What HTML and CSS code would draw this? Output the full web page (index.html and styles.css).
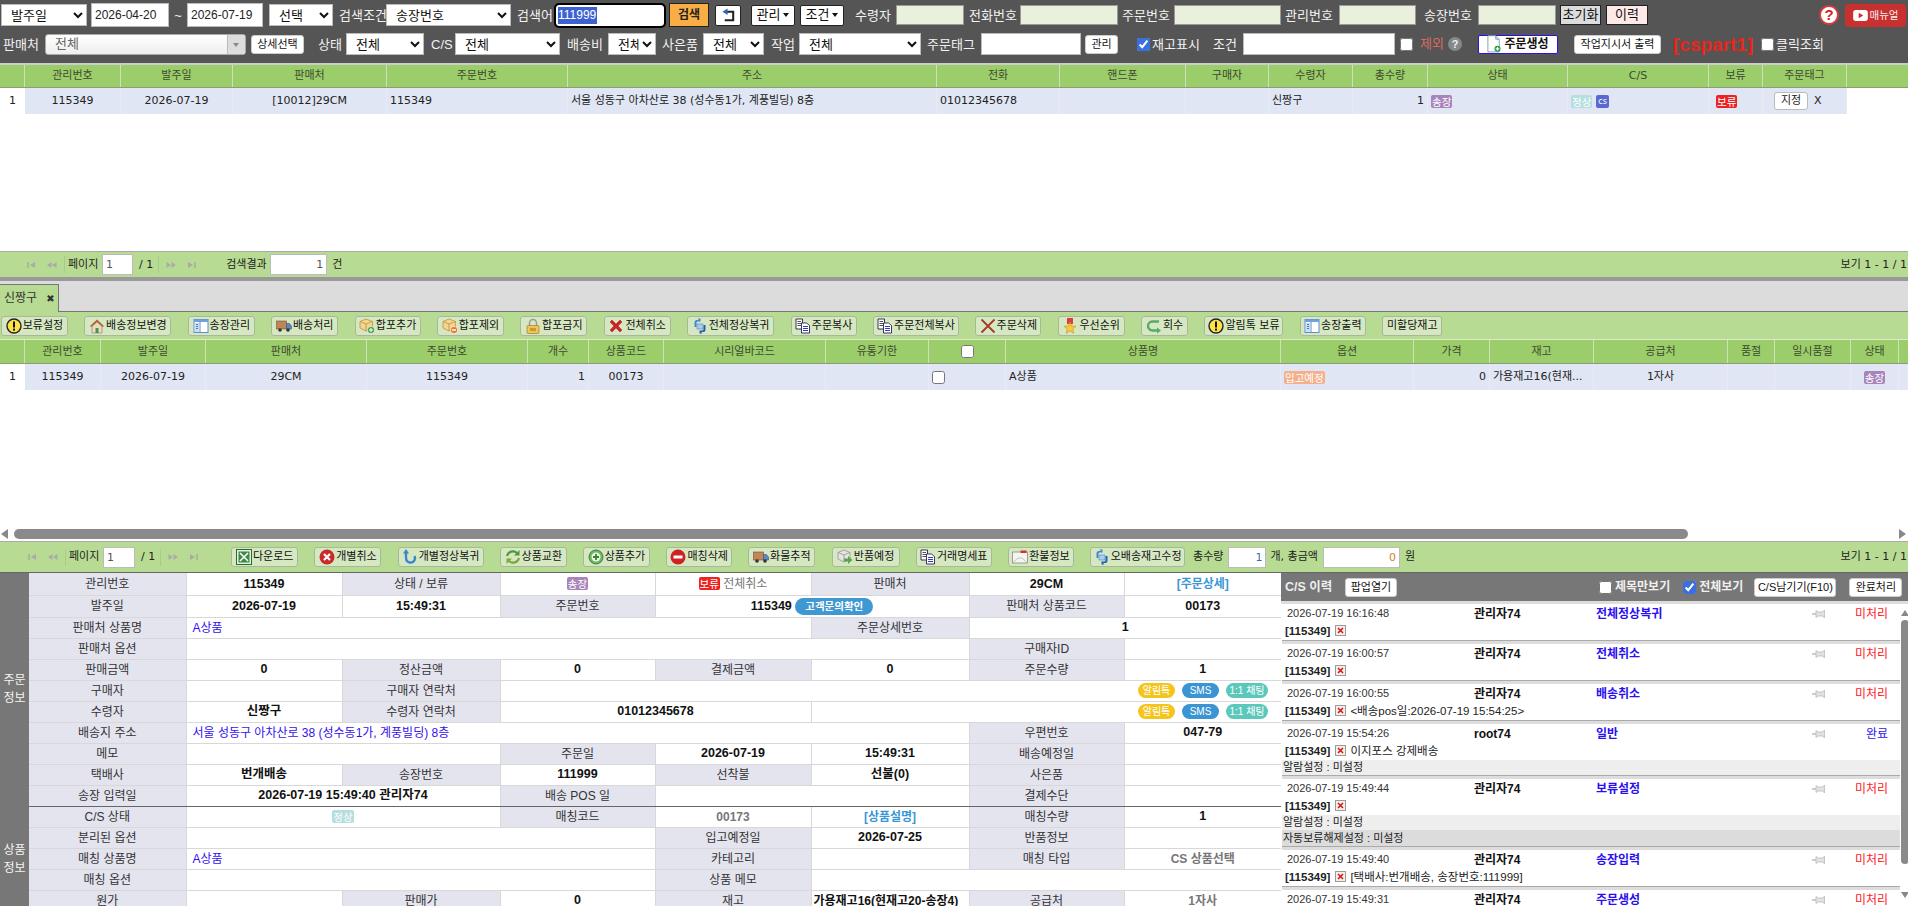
FILE: index.html
```html
<!DOCTYPE html>
<html lang="ko">
<head>
<meta charset="utf-8">
<title>주문 관리</title>
<link rel="stylesheet" href="styles.css">
</head>
<body>
<svg class="defs" width="0" height="0">
  <symbol id="i-warn" viewBox="0 0 16 16"><circle cx="8" cy="8" r="7" fill="#ffe24a" stroke="#222" stroke-width="1.4"/><rect x="7" y="3.500" width="2" height="6" fill="#111"/><rect x="7" y="10.600" width="2" height="2" fill="#111"/></symbol>
  <symbol id="i-house" viewBox="0 0 16 16"><path d="M1 8 8 1.500 15 8l-1.200 1L8 4 2.200 9z" fill="#b5603a"/><path d="M3 8.500 8 4.200l5 4.300V15H3z" fill="#eadcb8" stroke="#8a7a58" stroke-width=".6"/><rect x="6.500" y="10" width="3" height="5" fill="#4f8f55"/></symbol>
  <symbol id="i-win" viewBox="0 0 16 16"><rect x="1" y="1.500" width="14" height="13" fill="#fff" stroke="#5b8fd0"/><rect x="1" y="1.500" width="14" height="2.500" fill="#6ea3e0"/><rect x="2" y="5" width="4" height="9" fill="#cfe0f5"/><path d="M3 6.500h2M3 8.500h2M3 10.500h2" stroke="#4a78b5"/><path d="M7 4v10" stroke="#5b8fd0"/></symbol>
  <symbol id="i-truck" viewBox="0 0 16 16"><rect x=".5" y="3" width="10" height="8" fill="#c0855a" stroke="#7a4f30" stroke-width=".6"/><path d="M10.500 5.500h3l2 2.500v3h-5z" fill="#5f87c0" stroke="#37557f" stroke-width=".6"/><circle cx="4" cy="12" r="1.800" fill="#333"/><circle cx="12" cy="12" r="1.800" fill="#333"/></symbol>
  <symbol id="i-boxadd" viewBox="0 0 16 16"><path d="M7 1 13.500 3.500V10L7 13 1 10V3.500z" fill="#f5d58e" stroke="#b08a3a" stroke-width=".7"/><path d="M1 3.500 7 6l6.500-2.500M7 6v7" fill="none" stroke="#b08a3a" stroke-width=".7"/><circle cx="12" cy="12" r="3.600" fill="#4aa04a" stroke="#fff" stroke-width=".6"/><path d="M12 10v4M10 12h4" stroke="#fff" stroke-width="1.100"/></symbol>
  <symbol id="i-boxrem" viewBox="0 0 16 16"><path d="M7 1 13.500 3.500V10L7 13 1 10V3.500z" fill="#f5d58e" stroke="#b08a3a" stroke-width=".7"/><path d="M1 3.500 7 6l6.500-2.500M7 6v7" fill="none" stroke="#b08a3a" stroke-width=".7"/><circle cx="12" cy="12" r="3.600" fill="#e57a2a" stroke="#fff" stroke-width=".6"/><path d="M10 12h4" stroke="#fff" stroke-width="1.300"/></symbol>
  <symbol id="i-lock" viewBox="0 0 16 16"><path d="M4.500 8V5a3.500 3.500 0 0 1 7 0v3" fill="none" stroke="#999" stroke-width="1.500"/><rect x="2" y="7.500" width="12" height="8" rx="1" fill="#eec55a" stroke="#a47f25" stroke-width=".7"/><rect x="5" y="10" width="6" height="3" fill="#c89a30"/></symbol>
  <symbol id="i-xred" viewBox="0 0 16 16"><path d="M2 4 4 2l4 4 4-4 2 2-4 4 4 4-2 2-4-4-4 4-2-2 4-4z" fill="#d42020" stroke="#8a1010" stroke-width=".4"/></symbol>
  <symbol id="i-sync" viewBox="0 0 16 16"><path d="M2.500 9V4.500A2.500 2.500 0 0 1 5 2h2L5.500.5h3v3L7 3.500H5.500A1.300 1.300 0 0 0 4.500 5V9z" fill="#3d88d8"/><path d="M13.500 7v4.500A2.500 2.500 0 0 1 11 14H9l1.500 1.500h-3v-3L9 12.500h1.500a1.300 1.300 0 0 0 1-1.500V7z" fill="#2060b0"/><rect x="5" y="6" width="6" height="5" fill="#a8cdf0" stroke="#4077b8" stroke-width=".5"/></symbol>
  <symbol id="i-copy" viewBox="0 0 16 16"><path d="M1 1h6.500v10H1z" fill="#fff" stroke="#223" stroke-width=".9"/><path d="M2.500 3.500h3.500M2.500 5.500h3.500M2.500 7.500h3.500" stroke="#223" stroke-width=".8"/><path d="M6.500 5h5l3 2.500V15h-8z" fill="#fff" stroke="#225" stroke-width=".9"/><path d="M8 8.500h5M8 10.500h5M8 12.500h5" stroke="#22a" stroke-width=".9"/></symbol>
  <symbol id="i-xthin" viewBox="0 0 16 16"><path d="M1.500 1.500 14.500 14.500M14.500 1.500 1.500 14.500" stroke="#a53a2a" stroke-width="1.800"/></symbol>
  <symbol id="i-medal" viewBox="0 0 16 16"><path d="M5 0h6v6H5z" fill="#d8403a"/><path d="M8 4 9.700 8l4.300.3-3.300 2.700 1.100 4.300L8 13l-3.800 2.300 1.100-4.300L2 8.300 6.300 8z" fill="#f8c840" stroke="#c89220" stroke-width=".6"/></symbol>
  <symbol id="i-back" viewBox="0 0 16 16"><path d="M13 3.500H6.500a4.500 4.500 0 0 0 0 9H12" fill="none" stroke="#5aa86a" stroke-width="2.400"/><path d="M15 12.500 11 9.500v6z" fill="#5aa86a"/></symbol>
  <symbol id="i-excel" viewBox="0 0 16 16"><rect x=".5" y=".5" width="15" height="15" fill="#e2f0dc" stroke="#2a6b32"/><rect x="2.500" y="2.500" width="11" height="11" fill="#3a8a45"/><path d="M4 4 12 12M12 4 4 12" stroke="#fff" stroke-width="1.600"/></symbol>
  <symbol id="i-cancel" viewBox="0 0 16 16"><circle cx="8" cy="8" r="7.500" fill="#c92a2a"/><path d="M5 5 11 11M11 5 5 11" stroke="#fff" stroke-width="2.200"/></symbol>
  <symbol id="i-undo" viewBox="0 0 16 16"><path d="M4 3.500V9a4.500 4.500 0 1 0 8.500-2" fill="none" stroke="#3a85cf" stroke-width="2.400"/><path d="M4 0 7 4.500H1z" fill="#3a85cf"/></symbol>
  <symbol id="i-swap" viewBox="0 0 16 16"><path d="M2 7a6 6 0 0 1 10-3" fill="none" stroke="#4a9a40" stroke-width="2.200"/><path d="M14.500 1v5.500H9z" fill="#4a9a40"/><path d="M14 9a6 6 0 0 1-10 3" fill="none" stroke="#7aa83a" stroke-width="2.200"/><path d="M1.500 15V9.500H7z" fill="#7aa83a"/></symbol>
  <symbol id="i-plus" viewBox="0 0 16 16"><circle cx="8" cy="8" r="7" fill="#6eb765" stroke="#3e8038"/><circle cx="8" cy="8" r="4.500" fill="#eaf6e2"/><path d="M8 5v6M5 8h6" stroke="#3e8038" stroke-width="1.800"/></symbol>
  <symbol id="i-stop" viewBox="0 0 16 16"><circle cx="8" cy="8" r="7.500" fill="#cf2222"/><rect x="3.500" y="6.500" width="9" height="3" fill="#fff"/></symbol>
  <symbol id="i-ret" viewBox="0 0 16 16"><path d="M7 1 13 3.500V10L7 13 1 10V3.500z" fill="#e4e4e4" stroke="#8a8a8a" stroke-width=".7"/><path d="M1 3.500 7 6l6-2.500M7 6v7" fill="none" stroke="#8a8a8a" stroke-width=".7"/><path d="M7 9.500h4V7l4.500 4-4.500 4v-2.500H7z" fill="#5aa845"/></symbol>
  <symbol id="i-mail" viewBox="0 0 16 16"><rect x=".5" y="3" width="15" height="11" fill="#f4f4f0" stroke="#8a8a80" stroke-width=".8"/><path d="M.5 14 6 9h4l5.500 5" fill="none" stroke="#b0b0a8" stroke-width=".7"/><rect x="8.500" y="1.500" width="6" height="2.500" fill="#d83030"/></symbol>
  <symbol id="i-doc" viewBox="0 0 16 20"><path d="M1 .5h9l4 4V19H1z" fill="#fff" stroke="#7a97a8"/><path d="M10 .5v4h4" fill="#cfe0ea" stroke="#7a97a8"/><circle cx="12" cy="15.500" r="3.500" fill="#2e9e3a"/><path d="M12 13.500v4M10 15.500h4" stroke="#fff" stroke-width="1.300"/></symbol>
  <symbol id="i-return" viewBox="0 0 16 16"><path d="M6 4h7v9H4" fill="none" stroke="#222" stroke-width="2.200"/><path d="M7 .5v7L1.500 4z" fill="#2f66c0"/></symbol>
  <symbol id="i-pin" viewBox="0 0 14 12"><path d="M0 6h4" stroke="#bbb" stroke-width="1.500"/><path d="M4 2.500 6 4h5l1.500-2v8L11 8H6L4 9.500z" fill="#e2e2e2" stroke="#bbb" stroke-width=".8"/></symbol>
  <symbol id="i-bad" viewBox="0 0 11 11"><rect x=".5" y=".5" width="10" height="10" fill="#f3f0ea" stroke="#9a9a9a"/><path d="M3 3 8 8M8 3 3 8" stroke="#d11" stroke-width="1.500"/></symbol>
  <symbol id="i-first" viewBox="0 0 9 8"><path d="M1 1v6" stroke="#999"/><path d="M8 1v6L3 4z" fill="#aaa"/></symbol>
  <symbol id="i-prev" viewBox="0 0 11 8"><path d="M5.500 1v6L1 4zM10.500 1v6L6 4z" fill="#aaa"/></symbol>
  <symbol id="i-next" viewBox="0 0 11 8"><path d="M.5 1v6L5 4zM5.500 1v6L10 4z" fill="#aaa"/></symbol>
  <symbol id="i-last" viewBox="0 0 9 8"><path d="M1 1v6l5-3z" fill="#aaa"/><path d="M8 1v6" stroke="#999"/></symbol>
</svg>

<header class="top">
  <div class="top-row r1">
    <select class="ctl w86 ml1"><option>발주일</option></select>
    <input class="txt w78 ml4" value="2026-04-20">
    <span class="lbl w18 center">~</span>
    <input class="txt w76" value="2026-07-19">
    <select class="ctl w64 ml6"><option>선택</option></select>
    <span class="lbl w46 ml6">검색조건</span>
    <select class="ctl w125 ml1"><option>송장번호</option></select>
    <span class="lbl w34 ml6">검색어</span>
    <div class="search w108 ml5"><span class="sel">111999</span></div>
    <button class="btn-search w40 ml5">검색</button>
    <button class="btn-sq w26 ml6"><svg class="ic14"><use href="#i-return"/></svg></button>
    <button class="btn-sq w44 ml10">관리 <i class="car"></i></button>
    <button class="btn-sq w44 ml5">조건 <i class="car"></i></button>
    <span class="lbl w37 ml11">수령자</span>
    <input class="txt soft w68 ml4">
    <span class="lbl w46 ml5">전화번호</span>
    <input class="txt soft w98 ml5">
    <span class="lbl w48 ml4">주문번호</span>
    <input class="txt soft w107 ml4">
    <span class="lbl w49 ml4">관리번호</span>
    <input class="txt soft w77 ml5">
    <span class="lbl w49 ml8">송장번호</span>
    <input class="txt soft w78 ml5">
    <button class="btn-reset w41 ml4">초기화</button>
    <button class="btn-hist w42 ml5">이력</button>
    <span class="qmark ml-auto">?</span>
    <span class="manual"><svg class="play" viewBox="0 0 16 12"><rect width="16" height="12" rx="3" fill="#fff"/><path d="M6 3v6l5-3z" fill="#cc2f2f"/></svg>매뉴얼</span>
  </div>
  <div class="top-row r2">
    <span class="lbl w36 ml3">판매처</span>
    <div class="combo ml6"><span>전체</span><i class="combo-arrow"></i></div>
    <button class="btn-w w53 ml5">상세선택</button>
    <span class="lbl w22 ml14">상태</span>
    <select class="ctl w78 ml6"><option>전체</option></select>
    <span class="lbl w19 ml7">C/S</span>
    <select class="ctl w105 ml5"><option>전체</option></select>
    <span class="lbl w35 ml7">배송비</span>
    <select class="ctl w48 ml6"><option>전체</option></select>
    <span class="lbl w36 ml6">사은품</span>
    <select class="ctl w61 ml5"><option>전체</option></select>
    <span class="lbl w23 ml7">작업</span>
    <select class="ctl w122 ml5"><option>전체</option></select>
    <span class="lbl w48 ml6">주문태그</span>
    <input class="txt w100 ml6">
    <button class="btn-w w33 ml4">관리</button>
    <input class="chk ml19" type="checkbox" checked>
    <span class="lbl w47 ml2">재고표시</span>
    <span class="lbl w24 ml14">조건</span>
    <input class="txt w152 ml6">
    <input class="chk ml5" type="checkbox">
    <span class="lbl-red w22 ml7">제외</span>
    <span class="qsmall ml6">?</span>
    <button class="btn-make w80 ml16"><svg class="ic-doc"><use href="#i-doc"/></svg>주문생성</button>
    <button class="btn-w w87 ml16">작업지시서 출력</button>
    <span class="cspart ml12">[cspart1]</span>
    <input class="chk ml6" type="checkbox">
    <span class="lbl w48 ml2">클릭조회</span>
  </div>
</header>

<section class="grid-area">
  <div class="grid gridA head">
    <div></div><div>관리번호</div><div>발주일</div><div>판매처</div><div>주문번호</div><div>주소</div><div>전화</div><div>핸드폰</div><div>구매자</div><div>수령자</div><div>총수량</div><div>상태</div><div>C/S</div><div>보류</div><div>주문태그</div><div></div>
  </div>
  <div class="grid gridA row">
    <div class="idx">1</div><div>115349</div><div>2026-07-19</div><div>[10012]29CM</div><div class="left">115349</div><div class="left">서울 성동구 아차산로 38 (성수동1가, 계풍빌딩) 8층</div><div class="left">01012345678</div><div></div><div></div><div class="left">신짱구</div><div class="right">1</div><div class="left"><span class="tag tag-inv">송장</span></div><div class="left"><span class="tag tag-ok">정상</span><span class="tag tag-cs">cs</span></div><div class="left holdcell"><span class="tag tag-hold">보류</span></div><div class="left tagcell"><span class="btn-set">지정</span><span class="xmark">X</span></div><div class="idx"></div>
  </div>
</section>

<nav class="pager pager-top">
  <svg class="pg9 ml27"><use href="#i-first"/></svg>
  <svg class="pg11 ml10"><use href="#i-prev"/></svg>
  <i class="pg-sep ml7"></i>
  <span class="w30 ml3">페이지</span>
  <input class="pg-in w31 ml4" value="1">
  <span class="pg-of ml6">/ 1</span>
  <i class="pg-sep ml5"></i>
  <svg class="pg11 ml7"><use href="#i-next"/></svg>
  <svg class="pg9 ml10"><use href="#i-last"/></svg>
  <span class="w40 ml30">검색결과</span>
  <input class="pg-in alt w57 ml4" value="1">
  <span class="ml5">건</span>
  <span class="view">보기 1 - 1 / 1</span>
</nav>
<div class="divider"></div>

<div class="tabs"><div class="tab">신짱구<span class="tab-x">✖</span></div></div>

<div class="toolbar">
  <button class="tb w67"><svg class="ic"><use href="#i-warn"/></svg>보류설정</button>
  <button class="tb w87"><svg class="ic"><use href="#i-house"/></svg>배송정보변경</button>
  <button class="tb w67"><svg class="ic"><use href="#i-win"/></svg>송장관리</button>
  <button class="tb w67"><svg class="ic"><use href="#i-truck"/></svg>배송처리</button>
  <button class="tb w66"><svg class="ic"><use href="#i-boxadd"/></svg>합포추가</button>
  <button class="tb w67"><svg class="ic"><use href="#i-boxrem"/></svg>합포제외</button>
  <button class="tb w67"><svg class="ic"><use href="#i-lock"/></svg>합포금지</button>
  <button class="tb w67"><svg class="ic"><use href="#i-xred"/></svg>전체취소</button>
  <button class="tb w87"><svg class="ic"><use href="#i-sync"/></svg>전체정상복귀</button>
  <button class="tb w66"><svg class="ic"><use href="#i-copy"/></svg>주문복사</button>
  <button class="tb w86"><svg class="ic"><use href="#i-copy"/></svg>주문전체복사</button>
  <button class="tb w66"><svg class="ic"><use href="#i-xthin"/></svg>주문삭제</button>
  <button class="tb w67"><svg class="ic"><use href="#i-medal"/></svg>우선순위</button>
  <button class="tb w47"><svg class="ic"><use href="#i-back"/></svg>회수</button>
  <button class="tb w79"><svg class="ic"><use href="#i-warn"/></svg>알림톡 보류</button>
  <button class="tb w66"><svg class="ic"><use href="#i-win"/></svg>송장출력</button>
  <button class="tb w60">미할당재고</button>
</div>

<section class="grid-area">
  <div class="grid gridB head">
    <div></div><div>관리번호</div><div>발주일</div><div>판매처</div><div>주문번호</div><div>개수</div><div>상품코드</div><div>시리얼바코드</div><div>유통기한</div><div><input class="chk" type="checkbox"></div><div>상품명</div><div>옵션</div><div>가격</div><div>재고</div><div>공급처</div><div>품절</div><div>일시품절</div><div>상태</div><div></div>
  </div>
  <div class="grid gridB row">
    <div class="idx">1</div><div>115349</div><div>2026-07-19</div><div>29CM</div><div>115349</div><div class="right">1</div><div>00173</div><div></div><div></div><div class="left"><input class="chk" type="checkbox"></div><div class="left">A상품</div><div class="left"><span class="tag tag-due">입고예정</span></div><div class="right">0</div><div class="left ell">가용재고16(현재...</div><div>1자사</div><div></div><div></div><div><span class="tag tag-inv">송장</span></div><div></div>
  </div>
</section>

<div class="hscroll">
  <i class="arr-l"></i>
  <div class="thumb"></div>
  <i class="arr-r"></i>
</div>

<nav class="pager pager-bottom">
  <svg class="pg9 ml28"><use href="#i-first"/></svg>
  <svg class="pg11 ml10"><use href="#i-prev"/></svg>
  <i class="pg-sep ml7"></i>
  <span class="w30 ml3">페이지</span>
  <input class="pg-in w32 ml4" value="1">
  <span class="pg-of ml6">/ 1</span>
  <i class="pg-sep ml5"></i>
  <svg class="pg11 ml7"><use href="#i-next"/></svg>
  <svg class="pg9 ml10"><use href="#i-last"/></svg>
  <div class="pg-btns">
    <button class="tb w67"><svg class="ic"><use href="#i-excel"/></svg>다운로드</button>
    <button class="tb w67"><svg class="ic"><use href="#i-cancel"/></svg>개별취소</button>
    <button class="tb w86"><svg class="ic"><use href="#i-undo"/></svg>개별정상복귀</button>
    <button class="tb w67"><svg class="ic"><use href="#i-swap"/></svg>상품교환</button>
    <button class="tb w67"><svg class="ic"><use href="#i-plus"/></svg>상품추가</button>
    <button class="tb w66"><svg class="ic"><use href="#i-stop"/></svg>매칭삭제</button>
    <button class="tb w67"><svg class="ic"><use href="#i-truck"/></svg>화물추적</button>
    <button class="tb w68"><svg class="ic"><use href="#i-ret"/></svg>반품예정</button>
    <button class="tb w76"><svg class="ic"><use href="#i-copy"/></svg>거래명세표</button>
    <button class="tb w66"><svg class="ic"><use href="#i-mail"/></svg>환불정보</button>
    <button class="tb w95"><svg class="ic"><use href="#i-sync"/></svg>오배송재고수정</button>
  </div>
  <span class="ml8">총수량</span>
  <input class="pg-in alt blue w38 ml5" value="1">
  <span class="ml4">개, 총금액</span>
  <input class="pg-in alt orange w77 ml5" value="0">
  <span class="ml5">원</span>
  <span class="view">보기 1 - 1 / 1</span>
</nav>

<main class="bottom">
  <div class="detail-wrap">
    <table class="detail">
      <colgroup>
        <col class="c0"><col class="c1"><col class="c2"><col class="c3"><col class="c4"><col class="c5"><col class="c6"><col class="c7"><col class="c8">
      </colgroup>
      <tr class="tall">
        <td class="side" rowspan="11">주문<br>정보</td>
        <td class="l">관리번호</td><td class="v">115349</td><td class="l">상태 / 보류</td><td class="c"><span class="tag tag-inv">송장</span></td><td class="c"><span class="tag tag-hold">보류</span> <span class="gray">전체취소</span></td><td class="l">판매처</td><td class="v">29CM</td><td class="c"><span class="linkb">[주문상세]</span></td>
      </tr>
      <tr class="tall">
        <td class="l">발주일</td><td class="v">2026-07-19</td><td class="v">15:49:31</td><td class="l">주문번호</td><td class="v" colspan="2">115349 <span class="pill-q">고객문의확인</span></td><td class="l">판매처 상품코드</td><td class="v">00173</td>
      </tr>
      <tr>
        <td class="l">판매처 상품명</td><td class="blue-l" colspan="4">A상품</td><td class="l">주문상세번호</td><td class="v" colspan="2">1</td>
      </tr>
      <tr>
        <td class="l">판매처 옵션</td><td colspan="5"></td><td class="l">구매자ID</td><td></td>
      </tr>
      <tr>
        <td class="l">판매금액</td><td class="v">0</td><td class="l">정산금액</td><td class="v">0</td><td class="l">결제금액</td><td class="v">0</td><td class="l">주문수량</td><td class="v">1</td>
      </tr>
      <tr>
        <td class="l">구매자</td><td></td><td class="l">구매자 연락처</td><td class="pills" colspan="5"><span class="pill p-y">알림톡</span><span class="pill p-b">SMS</span><span class="pill p-t">1:1 채팅</span></td>
      </tr>
      <tr>
        <td class="l">수령자</td><td class="v">신짱구</td><td class="l">수령자 연락처</td><td class="v" colspan="2">01012345678</td><td class="pills" colspan="3"><span class="pill p-y">알림톡</span><span class="pill p-b">SMS</span><span class="pill p-t">1:1 채팅</span></td>
      </tr>
      <tr>
        <td class="l">배송지 주소</td><td class="blue-l" colspan="5">서울 성동구 아차산로 38 (성수동1가, 계풍빌딩) 8층</td><td class="l">우편번호</td><td class="v">047-79</td>
      </tr>
      <tr>
        <td class="l">메모</td><td colspan="2"></td><td class="l">주문일</td><td class="v">2026-07-19</td><td class="v">15:49:31</td><td class="l">배송예정일</td><td></td>
      </tr>
      <tr>
        <td class="l">택배사</td><td class="v">번개배송</td><td class="l">송장번호</td><td class="v">111999</td><td class="l">선착불</td><td class="v">선불(0)</td><td class="l">사은품</td><td></td>
      </tr>
      <tr class="pre-sec">
        <td class="l">송장 입력일</td><td class="v" colspan="2">2026-07-19 15:49:40 관리자74</td><td class="l">배송 POS 일</td><td colspan="2"></td><td class="l">결제수단</td><td></td>
      </tr>
      <tr>
        <td class="side side2" rowspan="5">상품<br>정보</td>
        <td class="l">C/S 상태</td><td class="c" colspan="2"><span class="tag tag-ok">정상</span></td><td class="l">매칭코드</td><td class="c gray">00173</td><td class="c"><span class="linkb">[상품설명]</span></td><td class="l">매칭수량</td><td class="v">1</td>
      </tr>
      <tr>
        <td class="l">분리된 옵션</td><td colspan="3"></td><td class="l">입고예정일</td><td class="v">2026-07-25</td><td class="l">반품정보</td><td></td>
      </tr>
      <tr>
        <td class="l">매칭 상품명</td><td class="blue-l" colspan="3">A상품</td><td class="l">카테고리</td><td></td><td class="l">매칭 타입</td><td class="c gray">CS 상품선택</td>
      </tr>
      <tr>
        <td class="l">매칭 옵션</td><td colspan="3"></td><td class="l">상품 메모</td><td colspan="3"></td>
      </tr>
      <tr>
        <td class="l">원가</td><td></td><td class="l">판매가</td><td class="v">0</td><td class="l">재고</td><td class="v clip">가용재고16(현재고20-송장4)</td><td class="l">공급처</td><td class="c gray">1자사</td>
      </tr>
    </table>
  </div>

  <aside class="cs">
    <div class="cs-head">
      <strong class="cs-title">C/S 이력</strong>
      <button class="btn-w w52 ml5">팝업열기</button>
      <input class="chk chk-a" type="checkbox">
      <span class="cs-opt">제목만보기</span>
      <input class="chk ml13" type="checkbox" checked>
      <span class="cs-opt">전체보기</span>
      <button class="btn-w w82 ml11">C/S남기기(F10)</button>
      <button class="btn-w w53 ml13">완료처리</button>
    </div>
    <div class="cs-body">
      <div class="cs-list">
        <article class="cs-item">
          <div class="cs-line"><span class="cs-date">2026-07-19 16:16:48</span><b>관리자74</b><b class="cs-cat">전체정상복귀</b><svg class="pin"><use href="#i-pin"/></svg><span class="cs-todo">미처리</span></div>
          <div class="cs-msg"><b>[115349]</b><svg class="bad"><use href="#i-bad"/></svg></div>
        </article>
        <article class="cs-item">
          <div class="cs-line"><span class="cs-date">2026-07-19 16:00:57</span><b>관리자74</b><b class="cs-cat">전체취소</b><svg class="pin"><use href="#i-pin"/></svg><span class="cs-todo">미처리</span></div>
          <div class="cs-msg"><b>[115349]</b><svg class="bad"><use href="#i-bad"/></svg></div>
        </article>
        <article class="cs-item">
          <div class="cs-line"><span class="cs-date">2026-07-19 16:00:55</span><b>관리자74</b><b class="cs-cat">배송취소</b><svg class="pin"><use href="#i-pin"/></svg><span class="cs-todo">미처리</span></div>
          <div class="cs-msg"><b>[115349]</b><svg class="bad"><use href="#i-bad"/></svg>&lt;배송pos일:2026-07-19 15:54:25&gt;</div>
        </article>
        <article class="cs-item">
          <div class="cs-line"><span class="cs-date">2026-07-19 15:54:26</span><b>root74</b><b class="cs-cat">일반</b><svg class="pin"><use href="#i-pin"/></svg><span class="cs-done">완료</span></div>
          <div class="cs-msg"><b>[115349]</b><svg class="bad"><use href="#i-bad"/></svg>이지포스 강제배송</div>
          <div class="cs-bar">알람설정 : 미설정</div>
        </article>
        <article class="cs-item">
          <div class="cs-line"><span class="cs-date">2026-07-19 15:49:44</span><b>관리자74</b><b class="cs-cat">보류설정</b><svg class="pin"><use href="#i-pin"/></svg><span class="cs-todo">미처리</span></div>
          <div class="cs-msg"><b>[115349]</b><svg class="bad"><use href="#i-bad"/></svg></div>
          <div class="cs-bar">알람설정 : 미설정</div>
          <div class="cs-bar dark">자동보류해제설정 : 미설정</div>
        </article>
        <article class="cs-item">
          <div class="cs-line"><span class="cs-date">2026-07-19 15:49:40</span><b>관리자74</b><b class="cs-cat">송장입력</b><svg class="pin"><use href="#i-pin"/></svg><span class="cs-todo">미처리</span></div>
          <div class="cs-msg"><b>[115349]</b><svg class="bad"><use href="#i-bad"/></svg>[택배사:번개배송, 송장번호:111999]</div>
        </article>
        <article class="cs-item">
          <div class="cs-line"><span class="cs-date">2026-07-19 15:49:31</span><b>관리자74</b><b class="cs-cat">주문생성</b><svg class="pin"><use href="#i-pin"/></svg><span class="cs-todo">미처리</span></div>
        </article>
      </div>
      <div class="vscroll"><i class="arr-u"></i><div class="vthumb"></div><i class="arr-d"></i></div>
    </div>
  </aside>
</main>
</body>
</html>
```

FILE: styles.css
```css
* { box-sizing: border-box; }
html, body { margin: 0; padding: 0; height: 906px; overflow: hidden; background: #fff; }
body { font: 11px/1.2 "DejaVu Sans", "Noto Sans CJK KR", sans-serif; color: #222; }
.defs { position: absolute; }
button { font: inherit; padding: 0; cursor: default; }
input, select { font: inherit; margin: 0; }

/* width / margin helpers */
.w18{width:18px}.w19{width:19px}.w22{width:22px}.w23{width:23px}.w24{width:24px}.w26{width:26px}.w30{width:30px}.w31{width:31px}.w32{width:32px}.w33{width:33px}.w34{width:34px}.w35{width:35px}.w36{width:36px}.w37{width:37px}.w38{width:38px}.w40{width:40px}.w41{width:41px}.w42{width:42px}.w44{width:44px}.w46{width:46px}.w47{width:47px}.w48{width:48px}.w49{width:49px}.w52{width:52px}.w53{width:53px}.w57{width:57px}.w60{width:60px}.w61{width:61px}.w64{width:64px}.w66{width:66px}.w67{width:67px}.w68{width:68px}.w76{width:76px}.w77{width:77px}.w78{width:78px}.w79{width:79px}.w80{width:80px}.w82{width:82px}.w86{width:86px}.w87{width:87px}.w95{width:95px}.w98{width:98px}.w100{width:100px}.w105{width:105px}.w107{width:107px}.w108{width:108px}.w122{width:122px}.w125{width:125px}.w152{width:152px}
.ml1{margin-left:1px}.ml2{margin-left:2px}.ml3{margin-left:3px}.ml4{margin-left:4px}.ml5{margin-left:5px}.ml6{margin-left:6px}.ml7{margin-left:7px}.ml8{margin-left:8px}.ml10{margin-left:10px}.ml11{margin-left:11px}.ml12{margin-left:12px}.ml13{margin-left:13px}.ml14{margin-left:14px}.ml16{margin-left:16px}.ml19{margin-left:19px}.ml27{margin-left:27px}.ml28{margin-left:28px}.ml30{margin-left:30px}.ml-auto{margin-left:auto}
.center { text-align: center; }

/* top search bar */
.top { height: 65px; background: #555; border-bottom: 2px solid #ccc; color: #fff; font-size: 13px; font-family: "Liberation Sans", "Noto Sans CJK KR", sans-serif; }
.top-row { display: flex; align-items: center; white-space: nowrap; }
.r1 { height: 30px; }
.r2 { height: 28px; }
.lbl { color: #f2f2f2; flex: none; line-height: 1; }
.lbl-red { color: #d96a62; flex: none; }
.ctl { height: 22px; flex: none; background: #fff; color: #111; border: 1px solid #bbb; border-radius: 0; padding: 0 0 0 5px; font-size: 13px; }
.txt { height: 24px; flex: none; background: #fff; border: 1px solid #bbb; border-radius: 0; padding: 0 3px; color: #222; font-size: 12px; }
.r2 .txt { height: 22px; }
.r1 .soft { height: 20px; background: #e9f1dd; border-color: #999; }
.search { height: 21px; flex: none; background: #fff; outline: 2px solid #000; border-radius: 3px; font-size: 12px; line-height: 21px; padding-left: 2px; color: #fff; }
.sel { display: inline-block; background: #3c62d2; line-height: 17px; padding-right: 1px; }
.btn-search { height: 24px; flex: none; background: #f9ae45; border: 1px solid #222; color: #222; font-weight: 700; font-size: 12px; }
.btn-sq { height: 21px; flex: none; background: #fff; border: 1px solid #222; color: #111; font-size: 13px; display: flex; align-items: center; justify-content: center; gap: 3px; border-radius: 2px; }
.ic14 { width: 15px; height: 15px; }
.car { width: 0; height: 0; border: 3.500px solid transparent; border-top: 4px solid #111; border-bottom: 0; }
.btn-reset { height: 20px; flex: none; background: #dcdcdc; border: 1px solid #222; color: #111; font-size: 13px; }
.btn-hist { height: 20px; flex: none; background: #fde9e8; border: 1px solid #222; color: #111; font-size: 13px; }
.qmark { width: 20px; height: 20px; flex: none; border-radius: 50%; background: #fff; border: 2px solid #d83a3a; color: #d32222; font: 700 15px/16px "Liberation Sans", sans-serif; text-align: center; }
.manual { width: 61px; height: 23px; flex: none; margin: 0 2px 0 6px; background: #c93030; border-radius: 4px; display: flex; align-items: center; justify-content: center; gap: 2px; font-size: 10.500px; color: #f5f0f0; }
.play { width: 15px; height: 11px; }
.combo { width: 201px; height: 21px; flex: none; border: 1px solid #aaa; border-radius: 3px; background: linear-gradient(#fff, #eee); color: #666; display: flex; align-items: center; justify-content: space-between; padding-left: 9px; overflow: hidden; }
.combo-arrow { width: 18px; height: 100%; background: #ddd; border-left: 1px solid #bbb; position: relative; }
.combo-arrow::after { content: ""; position: absolute; left: 5px; top: 8px; border: 3.500px solid transparent; border-top: 4px solid #888; border-bottom: 0; }
.btn-w { height: 19px; flex: none; background: #fff; color: #111; border: 1px solid #ccc; border-radius: 3px; font-size: 11px; line-height: 1; }
.chk { width: 13px; height: 13px; flex: none; accent-color: #3a6fe0; }
.qsmall { width: 14px; height: 14px; flex: none; border-radius: 50%; background: #888; color: #eee; font: 700 11px/14px "Liberation Sans", sans-serif; text-align: center; }
.btn-make { height: 19px; flex: none; background: #fff; border: 1px solid #2a10f0; color: #111; font-size: 12px; font-weight: 700; display: flex; align-items: center; justify-content: center; gap: 3px; border-radius: 2px; }
.ic-doc { width: 14px; height: 18px; }
.cspart { color: #e8261a; font: 700 19px/1 "Liberation Sans", sans-serif; width: 82px; flex: none; }

/* grids */
.grid-area { height: 186px; overflow: hidden; background: #fff; }
.grid { display: grid; }
.gridA { grid-template-columns: 25px 96px 112px 154px 181px 369px 123px 126px 83px 84px 75px 140px 141px 54px 84px 1fr; }
.gridB { grid-template-columns: 25px 76px 105px 161px 161px 61px 75px 162px 103px 77px 275px 133px 76px 104px 134px 47px 76px 48px 1fr; }
.gridA.head { height: 23px; }
.gridB.head { height: 24px; }
.head { background: #9ccd6b; border-bottom: 1px solid #8b9d7b; color: #3c4a2e; }
.head > div { display: flex; align-items: center; justify-content: center; border-right: 1px solid #cfe0bb; }
.head > div:last-child { border-right: 0; }
.row { height: 26px; }
.gridA.row { background: #e0e6f3; }
.gridB.row { background: #e0e6f3; }
.row > div { display: flex; align-items: center; justify-content: center; padding: 0 3px; border-right: 1px solid #e6ebf6; white-space: nowrap; overflow: hidden; }
.gridA.row > div:last-child, .row .idx { background: #fff; border: 0; }
.row .left { justify-content: flex-start; }
.row .right { justify-content: flex-end; }
.ell { text-overflow: ellipsis; }
.tag { display: inline-block; height: 13px; line-height: 13px; padding: 0 1px; border-radius: 2px; color: #fff; font-size: 10.500px; font-family: "Noto Sans CJK KR", sans-serif; }
.tag-inv { background: #a884bc; }
.tag-ok { background: #b6dede; }
.tag-cs { background: #5a68d0; margin-left: 4px; font: 8px/13px "DejaVu Sans", sans-serif; padding: 0 2px; }
.tag-hold { background: #ee2020; }
.tag-due { background: #f4b08b; }
.row .holdcell { padding-left: 7px; }
.row .tagcell { padding-left: 11px; }
.btn-set { width: 34px; height: 18px; flex: none; background: #fff; border: 1px solid #bbb; border-radius: 3px; text-align: center; line-height: 16px; }
.xmark { margin-left: 6px; }

/* pagers */
.pager { display: flex; align-items: center; background: #b8db93; white-space: nowrap; font-family: "DejaVu Sans", "Noto Sans CJK KR", sans-serif; }
.pager-top { height: 26px; border-top: 1px solid #aaa; }
.pager-bottom { height: 32px; border-top: 1px solid #aaa; border-bottom: 1px solid #666; }
.pg9 { width: 9px; height: 8px; flex: none; }
.pg11 { width: 11px; height: 8px; flex: none; }
.pg-sep { width: 1px; height: 17px; background: #a9cb85; flex: none; }
.pg-in { height: 21px; background: #fff; border: 1px solid #bbb; padding: 0 3px; font-size: 11px; color: #555; flex: none; }
.pg-in.alt { text-align: right; }
.pg-in.blue { color: #3a6ea8; }
.pg-in.orange { color: #d08030; }
.pg-of { flex: none; }
.view { margin-left: auto; padding-right: 1px; }
.pg-btns { display: flex; gap: 16.200px; margin-left: 33px; }
.divider { height: 4px; background: #999; }

.tabs { height: 31px; background: #dcdcdc; border-bottom: 1px solid #777; padding-top: 3px; }
.tab { width: 59px; height: 28px; background: #b8db93; border: 1px solid #777; border-width: 1px 1px 0 0; padding-left: 4px; line-height: 27px; color: #333; font-size: 12px; }
.tab-x { margin-left: 9px; font-size: 10px; color: #333; }

.toolbar { height: 28px; display: flex; align-items: center; gap: 16.400px; padding-left: 1px; background: #b8db93; border-bottom: 1px solid #dcebcc; }
.tb { height: 20px; flex: none; background: #d6e8c2; border: 1px solid #a9b89b; border-radius: 3px; color: #111; font-size: 11px; display: flex; align-items: center; justify-content: center; gap: 1px; white-space: nowrap; overflow: hidden; }
.ic { width: 16px; height: 16px; flex: none; }

/* horizontal scrollbar */
.hscroll { height: 15px; display: flex; align-items: center; background: #fff; }
.thumb { width: 1674px; height: 10px; margin-left: 6px; background: #8a8a8a; border-radius: 5px; }
.arr-l { width: 0; height: 0; margin-left: 1px; border: 5px solid transparent; border-right: 7px solid #888; border-left: 0; }
.arr-r { width: 0; height: 0; margin-left: auto; margin-right: 2px; border: 5px solid transparent; border-left: 7px solid #888; border-right: 0; }

/* detail table */
.bottom { height: 333px; display: flex; overflow: hidden; }
.detail-wrap { width: 1281px; flex: none; overflow: hidden; }
.detail { width: 1281px; table-layout: fixed; border-collapse: collapse; font-size: 12px; font-family: "Liberation Sans", "Noto Sans CJK KR", sans-serif; color: #333; }
.c0{width:29px}.c1{width:157px}.c2{width:156px}.c3{width:158px}.c4{width:155px}.c5{width:156px}.c6{width:158px}.c7{width:155px}.c8{width:157px}
.detail tr { height: 21px; }
.detail tr.tall { height: 22px; }
.detail td { border: 1px solid #d8d8d8; border-left: 0; padding: 0; text-align: center; vertical-align: middle; line-height: 1; white-space: nowrap; overflow: hidden; }
.detail tr:first-child td { border-top: 0; }
.detail td:last-child { border-right: 0; }
.detail .side { background: #777; color: #f4f4f4; line-height: 18px; border-right: 0; border-bottom-color: #777; }
.detail .side2 { border-top: 1px solid #ccc; }
.detail .l { background: #e4e4ef; }
.detail .v { font-weight: 700; font-size: 12.500px; color: #111; }
.detail .clip { text-align: left; padding-left: 2px; font-size: 12px; text-overflow: clip; }
.detail .blue-l { text-align: left; padding-left: 6px; color: #3311ee; }
.detail .gray, .gray { color: #777; }
.detail td.gray { font-weight: 700; }
.linkb { color: #3a97d4; font-weight: 700; }
.detail .pre-sec td:not(.side) { border-bottom: 1px solid #666; }
.pill-q { display: inline-block; height: 17px; line-height: 17px; padding: 0 10px; border-radius: 9px; background: #3f98d2; color: #fff; font-size: 10.500px; vertical-align: middle; }
.detail .pills { text-align: right; padding-right: 13px; }
.pill { display: inline-block; height: 15px; line-height: 15px; padding: 0; margin-left: 7px; width: 37px; border-radius: 8px; color: #fff; font-size: 10px; text-align: center; }
.p-y { background: #f5c51e; }
.p-b { background: #3a95d2; }
.p-t { background: #5cc8bb; width: 42px; }

/* C/S history */
.cs { flex: 1; min-width: 0; font-family: "Liberation Sans", "Noto Sans CJK KR", sans-serif; }
.cs-head { height: 31px; background: #777; border-bottom: 3px solid #ddd; display: flex; align-items: center; padding-left: 4px; color: #fff; }
.cs-title { width: 55px; font-size: 12.500px; color: #eee; }
.chk-a { margin-left: 202px; }
.cs-opt { margin-left: 3px; font-weight: 700; font-size: 12px; color: #f0f0f0; }
.cs-body { display: flex; height: 302px; overflow: hidden; }
.cs-list { width: 618px; flex: none; margin-left: 1px; }
.cs-item { border-bottom: 1px solid #aaa; margin-bottom: 3px; box-shadow: 0 3px 0 #ddd; }
.cs-line { height: 20px; display: grid; grid-template-columns: 192px 122px 216px 28px 48px; align-items: center; font-size: 12px; color: #111; }
.cs-date { padding-left: 5px; font-size: 11px; color: #333; }
.cs-cat { color: #2a10f0; }
.pin { width: 14px; height: 12px; }
.cs-todo, .cs-done { text-align: right; color: #ff2020; }
.cs-done { color: #2a10f0; }
.cs-msg { height: 16px; display: flex; align-items: center; padding-left: 3px; font-size: 11.500px; color: #222; white-space: nowrap; }
.cs-msg b { font-size: 11.500px; color: #222; }
.bad { width: 11px; height: 11px; margin: -4px 4px 0 5px; flex: none; }
.cs-bar { height: 15px; line-height: 15px; background: #eee; padding-left: 1px; color: #222; }
.cs-bar.dark { height: 16px; line-height: 16px; background: #dcdcdc; }
.vscroll { width: 9px; flex: none; display: flex; flex-direction: column; align-items: center; padding-top: 6px; }
.vthumb { width: 8px; height: 244px; margin-top: 4px; background: #8a8a8a; border-radius: 4px; flex: none; }
.arr-u { width: 0; height: 0; border: 4px solid transparent; border-bottom: 6px solid #888; border-top: 0; flex: none; }
.arr-d { width: 0; height: 0; margin-top: 28px; border: 4px solid transparent; border-top: 6px solid #888; border-bottom: 0; flex: none; }
```
